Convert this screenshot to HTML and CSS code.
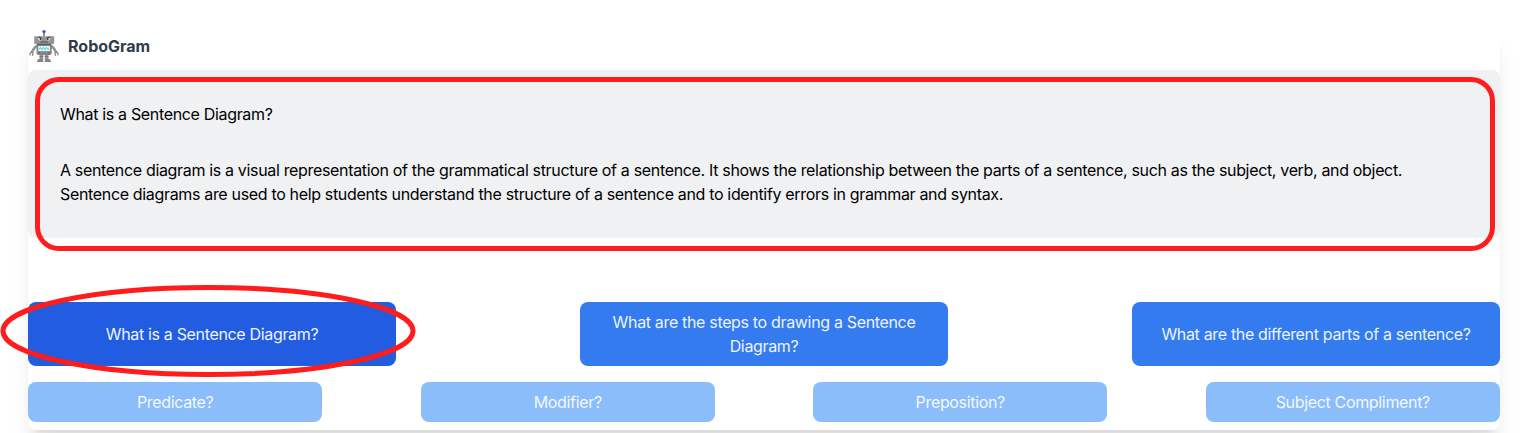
FILE: index.html
```html
<!DOCTYPE html>
<html lang="en">
<head>
<meta charset="utf-8">
<title>RoboGram</title>
<link rel="stylesheet" href="styles.css">
</head>
<body>
<main class="card">
  <header class="brand">
    <svg class="robot" viewBox="0 0 32 34" aria-hidden="true">
      <path d="M16 4v4" stroke="#666" stroke-width="1.500"/>
      <circle cx="16" cy="2.600" r="1.700" fill="#5551c4"/>
      <path d="M9 16.500 6 19.500 3.800 23.500M23 16.500l3 3 2.200 4" fill="none" stroke="#949494" stroke-width="2.600"/>
      <path d="m3.800 22.500-1.800 2v2M3.800 23l1.200 1.500-.6 2.300M28.200 22.500l1.800 2v2M28.200 23l-1.200 1.500.6 2.300" fill="none" stroke="#858585" stroke-width="1.200"/>
      <path d="M11.500 25h3.700v5h-3.700zM16.800 25h3.700v5h-3.700z" fill="#949494"/>
      <path d="M11.500 27.500h3.700M16.800 27.500h3.700" stroke="#666" stroke-width=".7"/>
      <path d="M9 33q0-3.300 3.500-3.300h2.700V33zM16.800 33v-3.300h2.700q3.500 0 3.500 3.300z" fill="#858585"/>
      <rect x="6.200" y="7" width="20" height="8" rx="1.300" fill="#949494"/>
      <path d="M7 7.800h18.400" stroke="#bbb" stroke-width=".9"/>
      <rect x="8.500" y="14.800" width="15.200" height="11.200" rx="2" fill="#858585"/>
      <path d="M9 15.400h14" stroke="#5b5b5b" stroke-width="1.100"/>
      <circle cx="12" cy="9.900" r="1.700" fill="#f4f4f4"/>
      <circle cx="20.300" cy="9.900" r="1.700" fill="#f4f4f4"/>
      <circle cx="12.500" cy="10" r=".9" fill="#222"/>
      <circle cx="19.800" cy="10" r=".9" fill="#222"/>
      <path d="m10 8 3.800 1M22.300 8l-3.800 1" stroke="#333" stroke-width=".9"/>
      <path d="M12.200 13h7.800" stroke="#555"/>
      <rect x="10.200" y="17" width="11.800" height="5.200" fill="#c0fff8"/>
      <path d="m11 20.300 1.500-1.700 1.500 1.800 1.500-1.800 1.500 1.800 1.500-1.800 1.300 1.500h1.200" fill="none" stroke="#45b8b4" stroke-width=".8"/>
      <circle cx="11.200" cy="23.800" r=".9" fill="#d33"/>
      <circle cx="21" cy="23.800" r=".9" fill="#d33"/>
    </svg>
    <h1 class="brand-name">RoboGram</h1>
  </header>
  <section class="answer">
    <p class="question">What is a Sentence Diagram?</p>
    <p class="reply">A sentence diagram is a visual representation of the grammatical structure of a sentence. It shows the relationship between the parts of a sentence, such as the subject, verb, and object.<br>Sentence diagrams are used to help students understand the structure of a sentence and to identify errors in grammar and syntax.</p>
    <span class="answer-mark"></span>
  </section>
  <div class="row questions">
    <button class="btn topic selected">What is a Sentence Diagram?<svg class="ellipse-mark" viewBox="0 0 416 92" aria-hidden="true"><ellipse cx="208" cy="46" rx="205" ry="43.500"/></svg></button>
    <button class="btn topic">What are the steps to drawing a Sentence Diagram?</button>
    <button class="btn topic">What are the different parts of a sentence?</button>
  </div>
  <div class="row terms">
    <button class="btn term">Predicate?</button>
    <button class="btn term">Modifier?</button>
    <button class="btn term">Preposition?</button>
    <button class="btn term">Subject Compliment?</button>
  </div>
</main>
</body>
</html>
```
FILE: styles.css
```css
* { box-sizing: border-box; }
html { overflow: hidden; }
body {
  margin: 0;
  padding: 28px 36px 0 28px;
  height: 433px;
  overflow: hidden;
  background: #fff;
  color: #000;
  font: 16px/24px Inter, "Liberation Sans", sans-serif;
  letter-spacing: -0.334px;
}
.card {
  height: 402px;
  border-radius: 8px;
  background: #fff;
  box-shadow: 0 20px 25px -5px rgba(0, 0, 0, .1), 0 8px 10px -6px rgba(0, 0, 0, .1);
}
.brand { display: flex; align-items: center; gap: 8px; height: 42px; padding-bottom: 6px; }
.robot { width: 32px; height: 34px; }
.brand-name { margin: 0; font-size: 16px; font-weight: 700; letter-spacing: 0; color: #303b4b; }
.answer {
  position: relative;
  height: 168px;
  padding: 32px;
  border-radius: 8px;
  background: #f0f1f3;
}
.question { margin: 0 0 32px; }
.reply { margin: 0; white-space: nowrap; }
.answer-mark {
  position: absolute;
  inset: 7px 5px -13px 7px;
  border: 5px solid #ff1c1c;
  border-radius: 24px;
}
.row { display: flex; justify-content: space-between; }
.questions { margin-top: 64px; }
.terms { margin-top: 16px; }
.btn {
  margin: 0;
  padding: 8px 16px;
  border: 0;
  border-radius: 8px;
  color: #fff;
  font: inherit;
  letter-spacing: inherit;
}
.topic { position: relative; width: 25%; height: 64px; background: #337bef; color: #edf4ff; }
.selected { background: #225de1; }
.term { width: 20%; height: 40px; background: #8abdf9; color: #f3f8ff; }
.ellipse-mark { position: absolute; left: -28px; top: -17px; width: 416px; height: 92px; }
.ellipse-mark ellipse { fill: none; stroke: #ff1c1c; stroke-width: 5; }
```
